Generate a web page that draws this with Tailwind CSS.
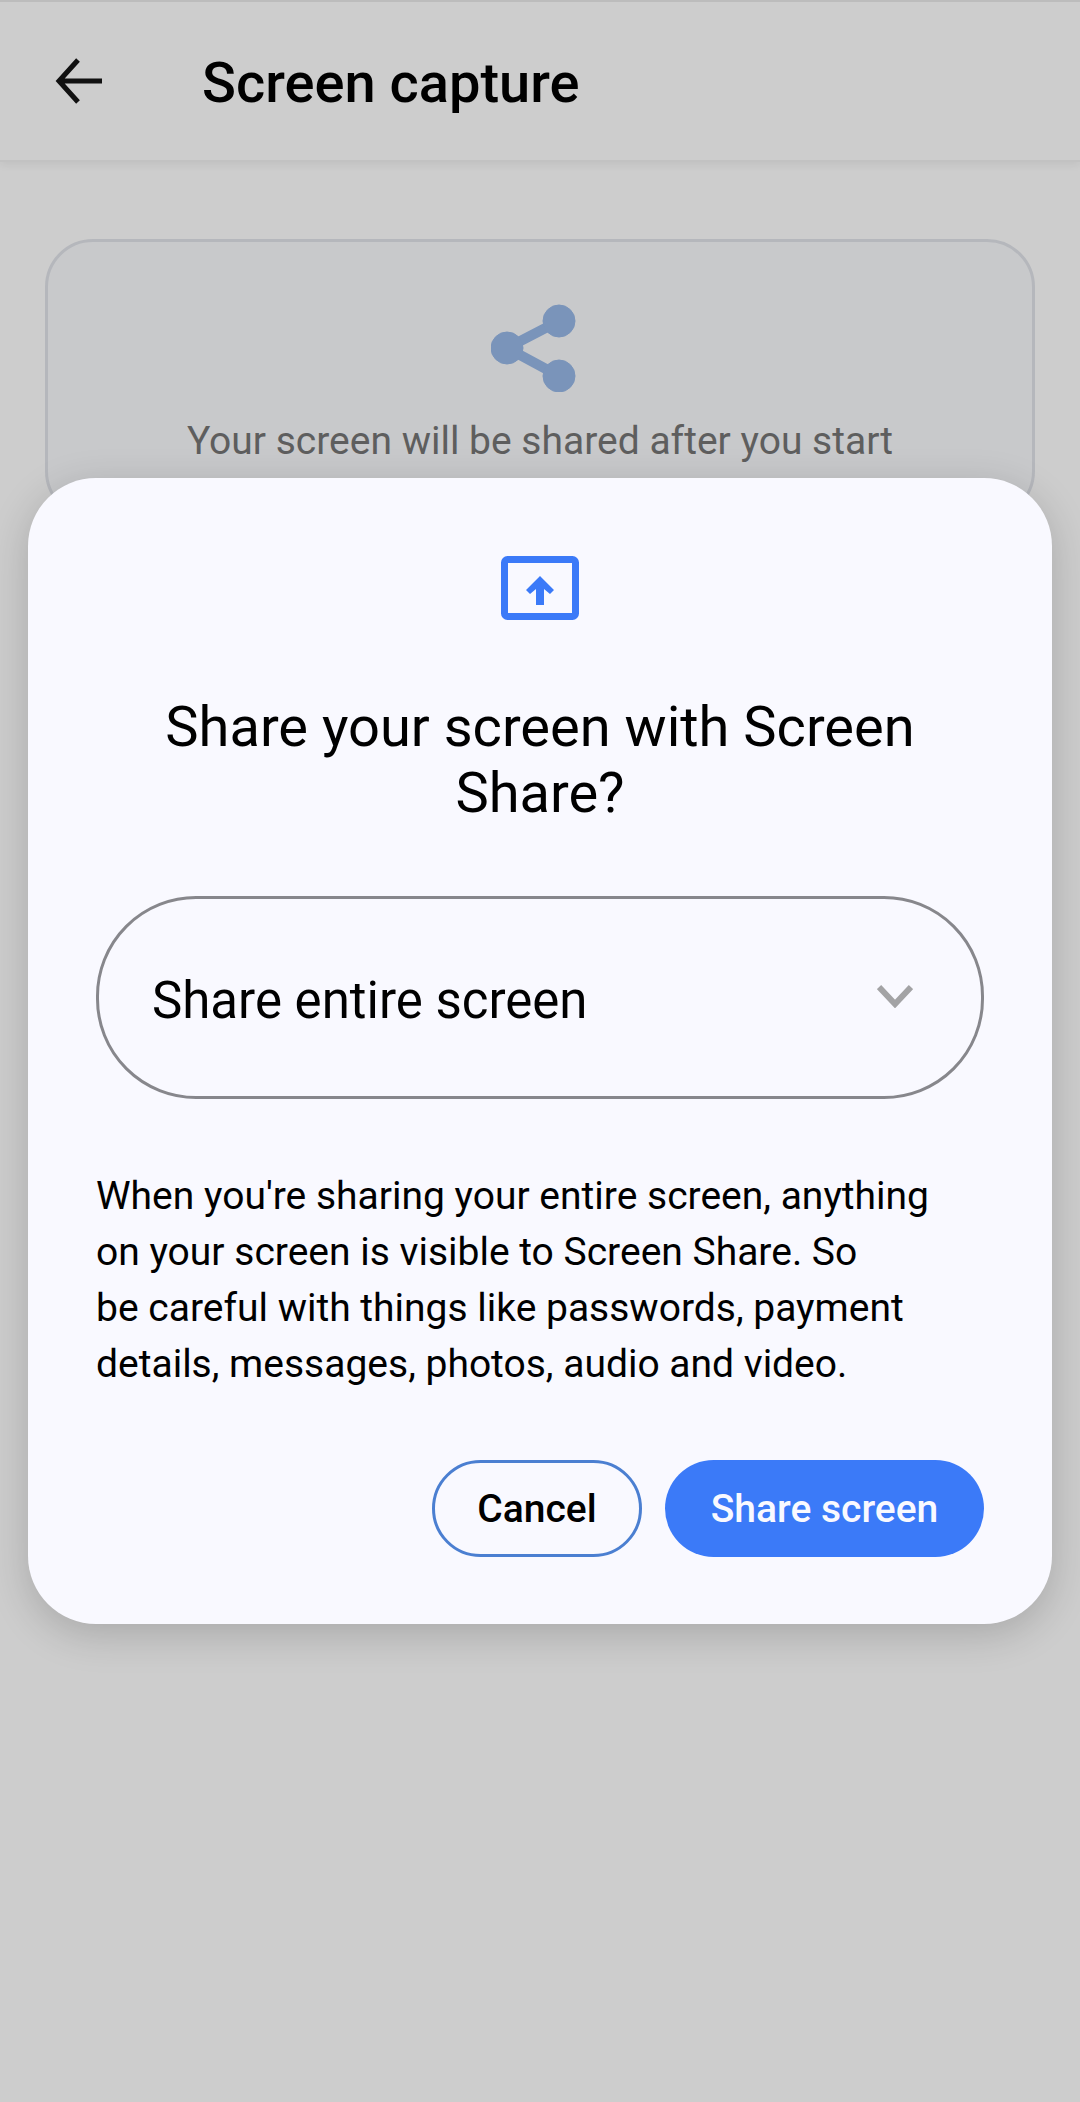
<!DOCTYPE html>
<html lang="en">
<head>
    <meta charset="UTF-8">
    <meta name="viewport" content="width=device-width, initial-scale=1.0">
    <title>Screen capture</title>
    <script src="https://cdn.jsdelivr.net/npm/@tailwindcss/browser@4"></script>
</head>
<body class="bg-[#cdcdcd] font-['Roboto',sans-serif]">
    <div class="relative w-[1080px] h-[2102px] overflow-hidden">
        <!-- App bar -->
        <header class="h-[162px] flex items-center border-t-2 border-b-2 border-t-[#bcbcbc] border-b-[#c2c2c2] shadow-[0_3px_8px_rgba(0,0,0,0.06)] pl-[55px]">
            <svg class="w-[48px] h-[48px]" viewBox="0 0 48 48" fill="none" stroke="#111" stroke-width="5">
                <path d="M47 24H5M23 3 4 24l19 21"/>
            </svg>
            <h1 class="ml-[99px] mt-[3px] text-[56px] font-medium text-black leading-none">Screen capture</h1>
        </header>

        <!-- Status card -->
        <div class="mt-[77px] mx-[45px] h-[280px] rounded-[48px] border-[3px] border-[#b5b7bc] bg-[#c8c9cb] flex flex-col items-center pt-[62px]">
            <svg class="w-[98px] h-[88px]" viewBox="0 0 98 88" fill="#7a94ba" stroke="#7a94ba">
                <path d="M68 17 16 44l52 28" fill="none" stroke-width="10"/>
                <circle cx="68" cy="17" r="16"/>
                <circle cx="16" cy="44" r="16"/>
                <circle cx="68" cy="72" r="16"/>
            </svg>
            <p class="mt-[25px] text-[39px] leading-[48px] text-[#5e5e5e]">Your screen will be shared after you start</p>
        </div>

        <!-- Share dialog -->
        <div class="absolute left-[28px] top-[478px] w-[1024px] h-[1146px] rounded-[68px] bg-[#f9f9ff] shadow-[0_10px_40px_rgba(0,0,0,0.18)] px-[68px] pt-[78px]">
            <svg class="mx-auto w-[78px] h-[64px]" viewBox="0 0 78 64">
                <rect x="3.5" y="3.5" width="71" height="57" rx="3" fill="none" stroke="#3b7af8" stroke-width="7"/>
                <path d="M39 20 53 34 49 38 43 33V49H35V33L29 38 25 34Z" fill="#3b7af8"/>
            </svg>
            <h2 class="mt-[74px] text-center text-[56px] leading-[66px] text-black">Share your screen with Screen Share?</h2>
            <div class="mt-[70px] h-[203px] rounded-[100px] border-[3px] border-[#87878c] flex items-center justify-between pl-[53px] pr-[68px]">
                <span class="pt-[7px] text-[51px] text-black">Share entire screen</span>
                <svg class="w-[36px] h-[24px] -mt-[4px]" viewBox="0 0 36 24" fill="none" stroke="#a3a3a5" stroke-width="6">
                    <path d="M2 3l16 17L34 3"/>
                </svg>
            </div>
            <p class="mt-[69px] text-[39px] leading-[56px] text-black">When you're sharing your entire screen, anything<br>on your screen is visible to Screen Share. So<br>be careful with things like passwords, payment<br>details, messages, photos, audio and video.</p>
            <div class="mt-[68px] flex justify-end gap-[23px]">
                <button class="w-[210px] h-[97px] pt-[2px] rounded-full border-[3px] border-[#4b7fd1] text-[39px] font-medium text-black">Cancel</button>
                <button class="w-[319px] h-[97px] pt-[2px] rounded-full bg-[#3b7af8] text-[39px] font-medium text-[#f9f9ff]">Share screen</button>
            </div>
        </div>
    </div>
</body>
</html>
